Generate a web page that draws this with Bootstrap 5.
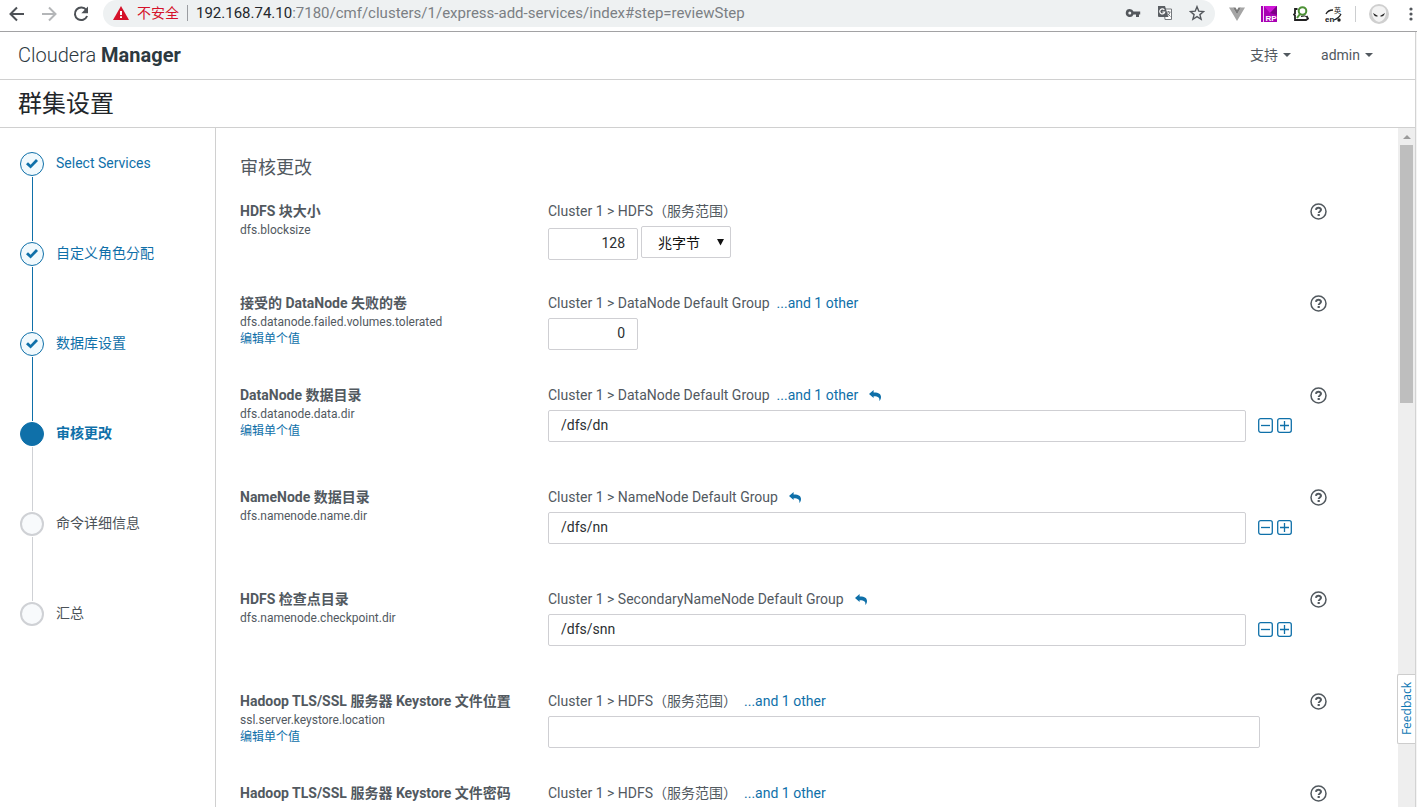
<!DOCTYPE html>
<html lang="zh-CN">
<head>
<meta charset="utf-8">
<meta name="viewport" content="width=device-width, initial-scale=1">
<title>群集设置 - Cloudera Manager</title>
<link rel="stylesheet" href="https://cdn.jsdelivr.net/npm/bootstrap@5.3.0/dist/css/bootstrap.min.css">
<style>
  :root { --cm-blue: #0f70a9; --cm-text: #52595f; --cm-line: #d0d0d0; }
  body { font: 14px/20px Roboto, "Noto Sans CJK SC", sans-serif; color: var(--cm-text); background: #fff; }
  a { color: var(--cm-blue); text-decoration: none; }
  svg { display: block; flex: none; }

  /* browser toolbar */
  .browser-bar { height: 32px; border-bottom: 1px solid #a2a2a4; padding: 0 0 4px 8px; color: #5a5e63; }
  .nav-icons { width: 95px; gap: 14px; }
  .icon-btn { border: 0; background: none; padding: 0; color: inherit; display: flex; }
  .address { height: 27px; border-radius: 14px; background: #eef1f2; padding: 0 10px 1px; font: 15px/20px Roboto, "Noto Sans CJK SC", sans-serif; color: #7b7f84; }
  .unsafe { color: #d5122a; font-size: 14px; }
  .host { color: #24272b; }
  .tick-line { width: 1px; height: 16px; background: #9a9da1; }
  .ext-icons { padding-left: 14px; gap: 16px; }
  .profile { gap: 13px; }

  /* application header */
  .app-head { height: 48px; border-bottom: 1px solid var(--cm-line); padding: 0 42px 1px 18px; }
  .app-head nav { gap: 30px; }
  .brand-text { font-size: 20px; line-height: 24px; font-weight: 300; color: #2d393f; }
  .brand-text b { font-weight: 700; }
  .menu-btn { border: 0; background: none; padding: 0; color: var(--cm-text); }
  .menu-btn::after { margin-left: 5px; vertical-align: 3px; border-width: 4px; border-bottom: 0; }
  .page-title { height: 48px; border-bottom: 1px solid var(--cm-line); padding: 0 18px; font-size: 24px; line-height: 49px; font-weight: 400; color: #22262a; }

  /* wizard steps */
  .steps { width: 216px; border-right: 1px solid var(--cm-line); padding: 24px 0 0 20px; }
  .step { height: 90px; gap: 12px; line-height: 22px; }
  .step-rail { width: 24px; }
  .dot { width: 24px; height: 24px; border-radius: 50%; border: 1px solid var(--cm-blue); background: #f1f9fd; color: var(--cm-blue); }
  .rail { flex: 1; width: 1px; margin: 1px 0; background: var(--cm-blue); }
  .current .dot { background: var(--cm-blue); }
  .current .rail, .todo .rail { background: #cfd1d5; }
  .todo .dot { border: 2px solid #cfd1d5; background: #f8fafc; }
  .todo { color: #4b5258; }

  /* settings */
  .settings { padding: 24px 71px 0 24px; }
  .settings h2 { font-size: 18px; line-height: 32px; font-weight: 400; margin: 0 0 17px; }
  .setting { min-height: 92px; }
  .setting.listed { min-height: 102px; }
  .name-col { width: 308px; font-size: 12px; line-height: 17px; }
  .name-col label { font-size: 14px; line-height: 20px; font-weight: 700; margin-bottom: 1px; }
  .scope { gap: 7px; }
  .scope .icon-btn { color: var(--cm-blue); margin-left: 4px; }
  .field { height: 32px; border: 1px solid #cfcfd3; border-radius: 2px; padding: 0 12px 3px; font-size: 14px; color: #2b2f33; background-color: #fff; box-shadow: none; min-height: 0; }
  .num { width: 90px; text-align: right; }
  .unit { width: 90px; padding: 2px 20px 0 16px; color: #111;
    background: #fff url("data:image/svg+xml,%3Csvg xmlns='http://www.w3.org/2000/svg' width='7' height='7'%3E%3Cpath d='M0 0h7L3.500 6.500z' fill='%23111'/%3E%3C/svg%3E") no-repeat right 6px top 12px / 7px 7px; }
  .control { margin-top: 5px; }
  .sized { gap: 3px; height: 34px; }
  .wide { width: calc(100% - 32px); }
  .pm { gap: 4px; padding: 0 0 2px 12px; color: var(--cm-blue); }
  .help-col { width: 17px; margin-left: 18px; padding-top: 2px; }

  /* scrollbar */
  .track { width: 17px; background: #eee; }
  .track .up { height: 17px; }
  .track .thumb { height: 258px; width: 13px; background: #bebebe; }
  .edge { width: 2px; border-left: 1px solid #d3d3d3; background: #f4f4f4; }
  .feedback { top: 546px; right: 0; width: 18px; height: 70px; border: 1px solid #cdcdcd; border-right: 0; border-radius: 2px 0 0 2px; background: #fff; color: #0f78b4; padding: 0; font: 12px/18px "Open Sans", sans-serif; }
  .feedback span { writing-mode: vertical-rl; rotate: 180deg; display: block; margin: auto; }
</style>
</head>
<body class="vh-100 d-flex flex-column overflow-hidden">
<svg width="0" height="0" class="position-absolute" aria-hidden="true">
  <symbol id="check" viewBox="0 0 14 12"><path d="M1 6.200 3 4.200l2.600 2.500L11 1.100l2 1.900-7.400 7.500z" fill="currentColor"/></symbol>
  <symbol id="help" viewBox="0 0 17 17"><circle cx="8.500" cy="8.500" r="7.500" fill="none" stroke="currentColor" stroke-width="1.500"/><path d="M6 6.900C6.200 4.200 11 4.200 11 6.800c0 1.700-2.300 1.600-2.300 3.300" fill="none" stroke="currentColor" stroke-width="2"/><path d="M7.600 11h2.200v2H7.600z" fill="currentColor"/></symbol>
  <symbol id="reply" viewBox="0 0 12 11"><path d="M0 4 4.600 0v2.400C9.800 2.300 12 4 12 7c0 1.600-.6 2.900-1.700 4 .6-3.300-.8-4.800-5.700-4.800V8z" fill="currentColor"/></symbol>
  <symbol id="minus" viewBox="0 0 15 15"><rect x=".7" y=".7" width="13.600" height="13.600" rx="2" fill="none" stroke="currentColor" stroke-width="1.300"/><path d="M3 7.500h9" stroke="currentColor" stroke-width="1.300"/></symbol>
  <symbol id="plus" viewBox="0 0 15 15"><rect x=".7" y=".7" width="13.600" height="13.600" rx="2" fill="none" stroke="currentColor" stroke-width="1.300"/><path d="M3 7.500h9M7.500 3v9" stroke="currentColor" stroke-width="1.300"/></symbol>
</svg>

<div class="browser-bar d-flex align-items-center flex-shrink-0">
  <div class="nav-icons d-flex align-items-center">
    <button class="icon-btn" aria-label="后退"><svg width="18" height="18" viewBox="0 0 18 18" fill="none" stroke="#4d5156" stroke-width="2"><path d="M16 9H3M9 2.500 2.500 9 9 15.500"/></svg></button>
    <button class="icon-btn" aria-label="前进"><svg width="18" height="18" viewBox="0 0 18 18" fill="none" stroke="#b4b6b8" stroke-width="2"><path d="M2 9h13M9 2.500 15.500 9 9 15.500"/></svg></button>
    <button class="icon-btn" aria-label="刷新"><svg width="18" height="18" viewBox="0 0 18 18"><path d="M14.300 5A6.300 6.300 0 1 0 15.100 11" fill="none" stroke="#4d5156" stroke-width="2"/><path d="M16 1.500v6.700H9.300z" fill="#4d5156"/></svg></button>
  </div>
  <div class="address d-flex align-items-center flex-grow-1">
    <svg width="16" height="14" viewBox="0 0 16 14"><path d="M8 0 16 14H0z" fill="#d5122a"/><path d="M7 5h2v4H7zM7 10.300h2v1.800H7z" fill="#fff"/></svg>
    <span class="unsafe ms-2">不安全</span>
    <span class="tick-line mx-2"></span>
    <span class="flex-grow-1 text-nowrap"><span class="host">192.168.74.10</span>:7180/cmf/clusters/1/express-add-services/index#step=reviewStep</span>
    <div class="d-flex align-items-center gap-3">
      <svg width="16" height="16" viewBox="0 0 16 16"><path d="M4.800 4a4 4 0 1 0 3.700 5.400H11V12h3V9.400h1.200V6.600H8.500A4 4 0 0 0 4.800 4zm0 2.500a1.500 1.500 0 1 1 0 3 1.500 1.500 0 0 1 0-3z" fill="#53575c"/></svg>
      <svg width="16" height="16" viewBox="0 0 16 16"><path d="M7 4h7.500v10.500H8z" fill="#fff" stroke="#75797d"/><path d="M1 1h7l3.500 11H2q-1 0-1-1z" fill="#5a5e63"/><path d="M7.300 5A2.500 2.500 0 1 0 7.700 7H5.400" fill="none" stroke="#fff" stroke-width="1.200"/><path d="M9.500 7h4M11.500 6v1M13 7q-.5 2.500-3 4M10.500 8.500l3 3" stroke="#75797d" fill="none"/></svg>
      <svg width="16" height="16" viewBox="0 0 16 16" fill="none" stroke="#53575c" stroke-width="1.400"><path d="m8 1.700 1.800 4.500 4.800.3-3.700 3.100 1.200 4.700L8 11.700l-4.100 2.600 1.200-4.700L1.400 6.500l4.800-.3z"/></svg>
    </div>
  </div>
  <div class="ext-icons d-flex align-items-center">
    <svg width="16" height="16" viewBox="0 0 16 16"><path d="M0 1.500h4L8 8.500l4-7h4L8 15z" fill="#a5a5a5"/><path d="M4 1.500h2.500L8 4l1.500-2.500H12L8 8.500z" fill="#7b7b7b"/></svg>
    <svg width="16" height="16" viewBox="0 0 16 16"><path d="M0 0h16v16H0z" fill="#a800b3"/><path d="M2 0h1v16H2z" fill="#f3c9f5"/><path d="m3 0 6 7 7-7z" fill="#d016d8"/><path d="m9 7 7-7v9z" fill="#7c0087"/><text x="4.500" y="14.500" font-family="Liberation Sans" font-size="8" font-weight="700" fill="#fff">RP</text></svg>
    <svg width="16" height="16" viewBox="0 0 16 16" fill="none"><path d="M4.500 3H2v4.500L1 8.500l1 1V14h11l2-1.500-1.500-2.500" stroke="#222" stroke-width="1.800"/><circle cx="9.500" cy="5" r="3.800" fill="#fff" stroke="#4d9136" stroke-width="2"/><path d="m7 8-3 4" stroke="#4d9136" stroke-width="2"/><path d="M8 10.500q4-1 5.500 0" stroke="#222"/></svg>
    <div class="profile d-flex align-items-center">
      <svg width="17" height="16" viewBox="0 0 17 16"><path d="M1 8q2-4 7-4M16 8q-2 4-7 6" fill="none" stroke="#222" stroke-width="1.300"/><circle cx="14" cy="14" r="1.700" fill="#222"/><text x="0" y="15.500" font-family="Liberation Sans" font-size="8" font-weight="700" fill="#222">en</text><text x="9" y="7" font-family="Noto Sans CJK SC" font-size="7" fill="#222">英</text></svg>
      <span class="tick-line opacity-50"></span>
      <svg width="20" height="20" viewBox="0 0 20 20"><circle cx="10" cy="10" r="10" fill="#cfcfcf"/><path d="M10 2c9 0 8 9 5 13q-5 6-10 0C2 11 1 2 10 2z" fill="#f3f3f3"/><path d="m4 9 5 3q-3 2-5-3zm12 0-5 3q3 2 5-3z" fill="#222"/></svg>
    </div>
    <svg width="12" height="16" viewBox="0 0 12 16" fill="#53575c"><circle cx="6" cy="3" r="1.600"/><circle cx="6" cy="8" r="1.600"/><circle cx="6" cy="13" r="1.600"/></svg>
  </div>
</div>

<div class="d-flex flex-grow-1 overflow-hidden">
<div class="d-flex flex-column flex-grow-1 overflow-hidden">
  <header class="app-head d-flex align-items-center justify-content-between flex-shrink-0">
    <a href="#" class="brand-text">Cloudera <b>Manager</b></a>
    <nav class="d-flex">
      <button class="menu-btn dropdown-toggle">支持</button>
      <button class="menu-btn dropdown-toggle">admin</button>
    </nav>
  </header>
  <h1 class="page-title m-0 flex-shrink-0">群集设置</h1>

  <div class="d-flex flex-grow-1 overflow-hidden">
    <aside class="steps flex-shrink-0">
      <a href="#" class="step d-flex"><span class="step-rail d-flex flex-column align-items-center"><span class="dot d-flex align-items-center justify-content-center"><svg width="14" height="12"><use href="#check"/></svg></span><span class="rail"></span></span>Select Services</a>
      <a href="#" class="step d-flex"><span class="step-rail d-flex flex-column align-items-center"><span class="dot d-flex align-items-center justify-content-center"><svg width="14" height="12"><use href="#check"/></svg></span><span class="rail"></span></span>自定义角色分配</a>
      <a href="#" class="step d-flex"><span class="step-rail d-flex flex-column align-items-center"><span class="dot d-flex align-items-center justify-content-center"><svg width="14" height="12"><use href="#check"/></svg></span><span class="rail"></span></span>数据库设置</a>
      <a href="#" class="step current d-flex fw-bold"><span class="step-rail d-flex flex-column align-items-center"><span class="dot"></span><span class="rail"></span></span>审核更改</a>
      <div class="step todo d-flex"><span class="step-rail d-flex flex-column align-items-center"><span class="dot"></span><span class="rail"></span></span>命令详细信息</div>
      <div class="step todo d-flex"><span class="step-rail d-flex flex-column align-items-center"><span class="dot"></span></span>汇总</div>
    </aside>

    <main class="settings flex-grow-1 overflow-hidden">
      <h2>审核更改</h2>

      <section class="setting d-flex">
        <div class="name-col flex-shrink-0"><label class="d-block" for="blocksize">HDFS 块大小</label><div>dfs.blocksize</div></div>
        <div class="flex-grow-1">
          <div class="scope d-flex align-items-center"><span>Cluster 1 &gt; HDFS（服务范围）</span></div>
          <div class="control sized d-flex"><input id="blocksize" class="form-control field num align-self-end" value="128"><select class="form-select field unit" aria-label="单位"><option>兆字节</option></select></div>
        </div>
        <div class="help-col"><button class="icon-btn" aria-label="帮助"><svg width="17" height="17"><use href="#help"/></svg></button></div>
      </section>

      <section class="setting d-flex">
        <div class="name-col flex-shrink-0"><label class="d-block" for="failed">接受的 DataNode 失败的卷</label><div>dfs.datanode.failed.volumes.tolerated</div><a href="#">编辑单个值</a></div>
        <div class="flex-grow-1">
          <div class="scope d-flex align-items-center"><span>Cluster 1 &gt; DataNode Default Group</span><a href="#">...and 1 other</a></div>
          <div class="control"><input id="failed" class="form-control field num" value="0"></div>
        </div>
        <div class="help-col"><button class="icon-btn" aria-label="帮助"><svg width="17" height="17"><use href="#help"/></svg></button></div>
      </section>

      <section class="setting listed d-flex">
        <div class="name-col flex-shrink-0"><label class="d-block" for="datadir">DataNode 数据目录</label><div>dfs.datanode.data.dir</div><a href="#">编辑单个值</a></div>
        <div class="flex-grow-1">
          <div class="scope d-flex align-items-center"><span>Cluster 1 &gt; DataNode Default Group</span><a href="#">...and 1 other</a><button class="icon-btn" aria-label="重置"><svg width="12" height="11"><use href="#reply"/></svg></button></div>
          <div class="control d-flex align-items-center"><input id="datadir" class="form-control field" value="/dfs/dn"><div class="pm d-flex"><button class="icon-btn" aria-label="删除"><svg width="15" height="15"><use href="#minus"/></svg></button><button class="icon-btn" aria-label="添加"><svg width="15" height="15"><use href="#plus"/></svg></button></div></div>
        </div>
        <div class="help-col"><button class="icon-btn" aria-label="帮助"><svg width="17" height="17"><use href="#help"/></svg></button></div>
      </section>

      <section class="setting listed d-flex">
        <div class="name-col flex-shrink-0"><label class="d-block" for="namedir">NameNode 数据目录</label><div>dfs.namenode.name.dir</div></div>
        <div class="flex-grow-1">
          <div class="scope d-flex align-items-center"><span>Cluster 1 &gt; NameNode Default Group</span><button class="icon-btn" aria-label="重置"><svg width="12" height="11"><use href="#reply"/></svg></button></div>
          <div class="control d-flex align-items-center"><input id="namedir" class="form-control field" value="/dfs/nn"><div class="pm d-flex"><button class="icon-btn" aria-label="删除"><svg width="15" height="15"><use href="#minus"/></svg></button><button class="icon-btn" aria-label="添加"><svg width="15" height="15"><use href="#plus"/></svg></button></div></div>
        </div>
        <div class="help-col"><button class="icon-btn" aria-label="帮助"><svg width="17" height="17"><use href="#help"/></svg></button></div>
      </section>

      <section class="setting listed d-flex">
        <div class="name-col flex-shrink-0"><label class="d-block" for="checkdir">HDFS 检查点目录</label><div>dfs.namenode.checkpoint.dir</div></div>
        <div class="flex-grow-1">
          <div class="scope d-flex align-items-center"><span>Cluster 1 &gt; SecondaryNameNode Default Group</span><button class="icon-btn" aria-label="重置"><svg width="12" height="11"><use href="#reply"/></svg></button></div>
          <div class="control d-flex align-items-center"><input id="checkdir" class="form-control field" value="/dfs/snn"><div class="pm d-flex"><button class="icon-btn" aria-label="删除"><svg width="15" height="15"><use href="#minus"/></svg></button><button class="icon-btn" aria-label="添加"><svg width="15" height="15"><use href="#plus"/></svg></button></div></div>
        </div>
        <div class="help-col"><button class="icon-btn" aria-label="帮助"><svg width="17" height="17"><use href="#help"/></svg></button></div>
      </section>

      <section class="setting d-flex">
        <div class="name-col flex-shrink-0"><label class="d-block" for="keystore">Hadoop TLS/SSL 服务器 Keystore 文件位置</label><div>ssl.server.keystore.location</div><a href="#">编辑单个值</a></div>
        <div class="flex-grow-1">
          <div class="scope d-flex align-items-center"><span>Cluster 1 &gt; HDFS（服务范围）</span><a href="#">...and 1 other</a></div>
          <div class="control"><input id="keystore" class="form-control field wide"></div>
        </div>
        <div class="help-col"><button class="icon-btn" aria-label="帮助"><svg width="17" height="17"><use href="#help"/></svg></button></div>
      </section>

      <section class="setting d-flex">
        <div class="name-col flex-shrink-0"><label class="d-block" for="keypass">Hadoop TLS/SSL 服务器 Keystore 文件密码</label></div>
        <div class="flex-grow-1">
          <div class="scope d-flex align-items-center"><span>Cluster 1 &gt; HDFS（服务范围）</span><a href="#">...and 1 other</a></div>
          <div class="control"><input id="keypass" class="form-control field wide"></div>
        </div>
        <div class="help-col"><button class="icon-btn" aria-label="帮助"><svg width="17" height="17"><use href="#help"/></svg></button></div>
      </section>
    </main>

    <div class="track position-relative flex-shrink-0 d-flex flex-column align-items-center">
      <div class="up d-flex align-items-center"><svg width="8" height="4" viewBox="0 0 8 4"><path d="M4 0 8 4H0z" fill="#9b9b9b"/></svg></div>
      <div class="thumb"></div>
      <button class="feedback position-absolute"><span>Feedback</span></button>
    </div>
  </div>
</div>
<div class="edge flex-shrink-0"></div>
</div>
<script src="https://cdn.jsdelivr.net/npm/bootstrap@5.3.0/dist/js/bootstrap.bundle.min.js"></script>
</body>
</html>
